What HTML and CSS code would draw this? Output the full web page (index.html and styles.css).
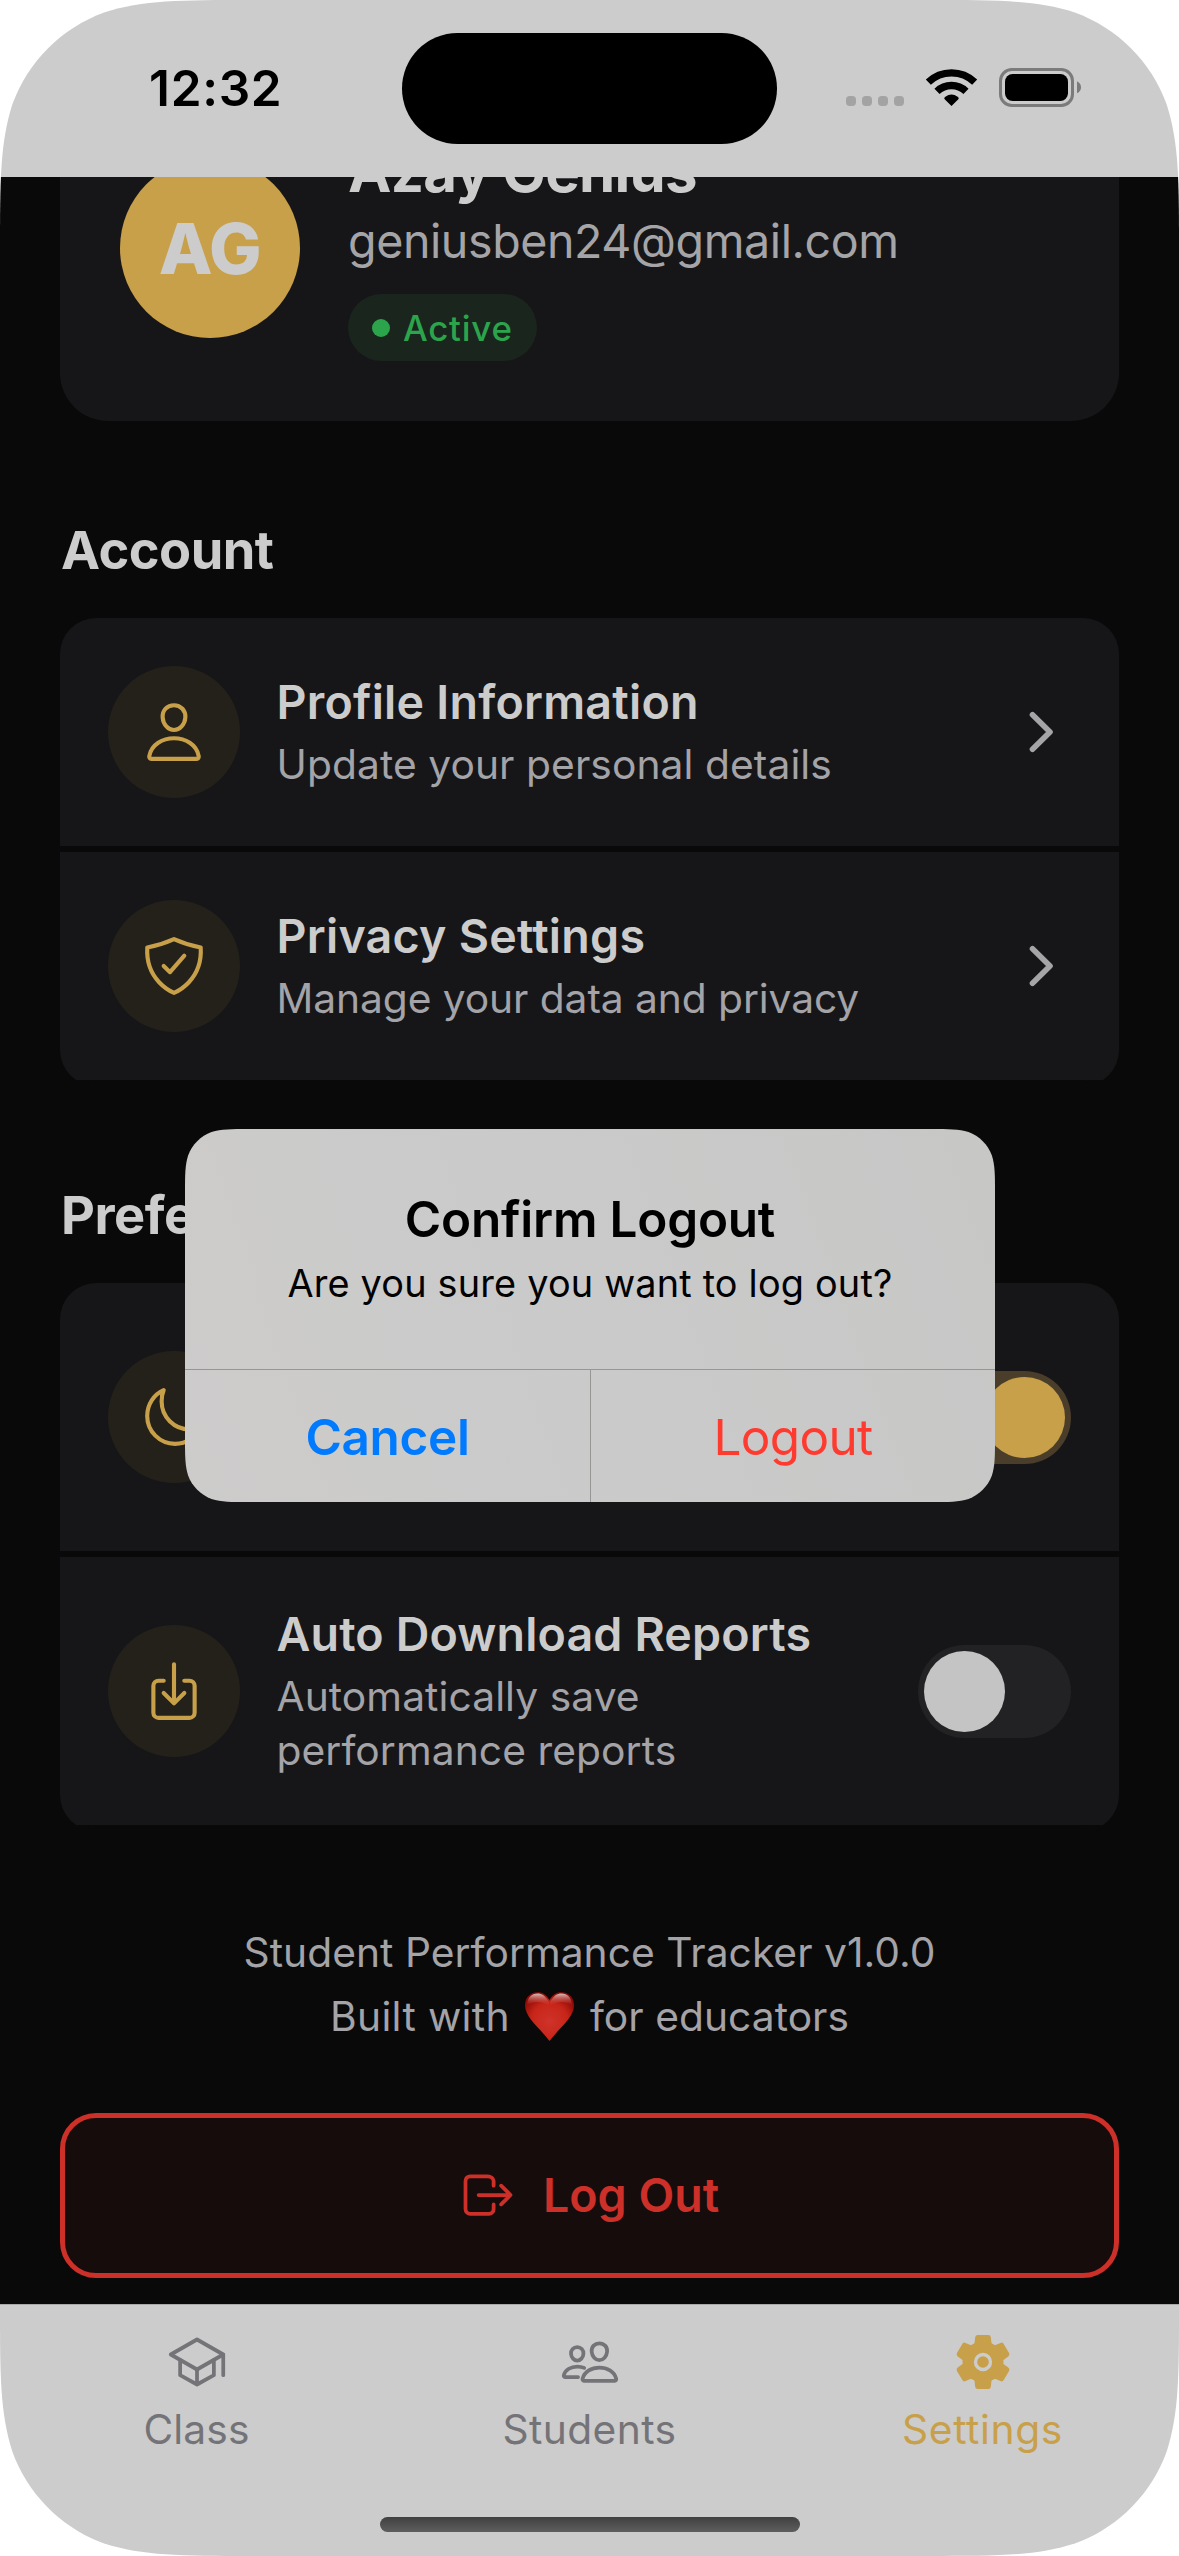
FILE: index.html
```html
<!DOCTYPE html>
<html lang="en">
<head>
<meta charset="utf-8">
<title>Settings</title>
<link rel="stylesheet" href="styles.css">
</head>
<body>
<div class="phone">
  <header class="status-bar">
    <div class="time">12:32</div>
    <div class="island"></div>
    <svg class="status-icons" viewBox="0 0 900 300" aria-hidden="true">
      <g fill="#a3a3a3">
        <rect x="138" y="168" width="30" height="30" rx="11"/>
        <rect x="186" y="168" width="30" height="30" rx="11"/>
        <rect x="234" y="168" width="30" height="30" rx="11"/>
        <rect x="282" y="168" width="30" height="30" rx="11"/>
      </g>
      <g fill="none" stroke="#000">
        <path stroke-width="22" d="M385 126.500A100.500 100.500 0 0 1 524 126.500"/>
        <path stroke-width="22" d="M411 154A62.500 62.500 0 0 1 498 154"/>
      </g>
      <path d="M454.500 198L434 178Q430 173 436 170Q454.500 157 473 170Q479 173 475 178Z"/>
      <rect x="601.500" y="88.500" width="216" height="108" rx="34" fill="none" stroke="#7b7b7b" stroke-width="9"/>
      <rect x="615" y="102" width="189" height="81" rx="23"/>
      <path fill="#7b7b7b" d="M831 124Q843 130 843 142T831 160Z"/>
    </svg>
  </header>

  <main class="content">
    <section class="profile">
      <div class="avatar">AG</div>
      <div class="profile-text">
        <div class="name">Azay Genius</div>
        <div class="email">geniusben24@gmail.com</div>
        <div class="badge"><span class="dot"></span><span>Active</span></div>
      </div>
    </section>

    <h2 class="heading">Account</h2>
    <section class="group">
      <div class="row">
        <div class="icon-circle">
          <svg class="icon" viewBox="0 0 512 512"><path d="M344 144c-3.920 52.870-44 96-88 96s-84.150-43.120-88-96c-4-55 35-96 88-96s92 42 88 96z"/><path d="M256 304c-87 0-175.300 48-191.640 138.600C62.390 453.520 68.570 464 80 464h352c11.440 0 17.620-10.480 15.640-21.400C431.300 352 343 304 256 304z"/></svg>
        </div>
        <div class="row-text">
          <div class="title">Profile Information</div>
          <div class="sub">Update your personal details</div>
        </div>
        <svg class="chevron" viewBox="0 0 60 60"><path d="M21.500 12.700L39 30L21.500 47.300"/></svg>
      </div>
      <div class="row">
        <div class="icon-circle">
          <svg class="icon" viewBox="0 0 512 512"><path d="M336 176L225.200 304 176 255.800"/><path d="M463.100 112.370C373.680 96.330 336.710 84.450 256 48c-80.710 36.450-117.680 48.330-207.100 64.370C32.700 369.130 240.580 457.790 256 464c15.420-6.210 223.300-94.870 207.100-351.630z"/></svg>
        </div>
        <div class="row-text">
          <div class="title">Privacy Settings</div>
          <div class="sub manage">Manage your data and privacy</div>
        </div>
        <svg class="chevron" viewBox="0 0 60 60"><path d="M21.500 12.700L39 30L21.500 47.300"/></svg>
      </div>
    </section>

    <h2 class="heading">Preferences</h2>
    <section class="group">
      <div class="row tall">
        <div class="icon-circle">
          <svg class="icon" viewBox="0 0 512 512"><path d="M160 136c0-30.620 4.510-61.610 16-88C99.570 81.270 48 159.320 48 248c0 119.290 96.710 216 216 216 88.680 0 166.730-51.570 200-128-26.390 11.490-57.380 16-88 16-119.290 0-216-96.710-216-216z"/></svg>
        </div>
        <div class="row-text"></div>
        <div class="toggle on"><span class="knob"></span></div>
      </div>
      <div class="row tall">
        <div class="icon-circle">
          <svg class="icon" viewBox="0 0 512 512"><path d="M336 176h40a40 40 0 0 1 40 40v208a40 40 0 0 1-40 40H136a40 40 0 0 1-40-40V216a40 40 0 0 1 40-40h40"/><path d="M176 272l80 80 80-80M256 48v288"/></svg>
        </div>
        <div class="row-text">
          <div class="title auto">Auto Download Reports</div>
          <div class="sub">Automatically save<br>performance reports</div>
        </div>
        <div class="toggle"><span class="knob"></span></div>
      </div>
    </section>

    <footer class="about">
      <div class="about-line">Student Performance Tracker v1.0.0</div>
      <div class="about-line built">
        <span class="built-with">Built with</span>
        <svg class="heart" viewBox="0 0 49 49" aria-label="love">
          <defs>
            <radialGradient id="heartFill" cx=".5" cy=".6" r=".62">
              <stop offset="0" stop-color="#cf3329"/>
              <stop offset=".6" stop-color="#c82519"/>
              <stop offset="1" stop-color="#8c0904"/>
            </radialGradient>
            <linearGradient id="heartShine" x1="0" y1="0" x2="0" y2="1">
              <stop offset="0" stop-color="#dcc8c5" stop-opacity=".95"/>
              <stop offset="1" stop-color="#cf3329" stop-opacity="0"/>
            </linearGradient>
          </defs>
          <path fill="url(#heartFill)" d="M24.500 8C21 2 17 .3 12.500 .3C5 .3 0 6 0 13C0 26 15 36 24.500 49C34 36 49 26 49 13C49 6 44 .3 36.500 .3C32 .3 28 2 24.500 8Z"/>
          <path fill="url(#heartShine)" d="M24 10C20 3.500 17 1.500 12.500 1.500C6.500 1.500 2.500 5.500 2 13C8 9 18 9 24 14Z"/>
          <path fill="url(#heartShine)" d="M25 10C29 3.500 32 1.500 36.500 1.500C42.500 1.500 46.500 5.500 47 13C41 9 31 9 25 14Z"/>
        </svg>
        <span>for educators</span>
      </div>
    </footer>

    <div class="logout">
      <svg class="logout-icon" viewBox="0 0 512 512"><path d="M304 336v40a40 40 0 0 1-40 40H104a40 40 0 0 1-40-40V136a40 40 0 0 1 40-40h152c22.090 0 48 17.910 48 40v40M368 336l80-80-80-80M176 256h256"/></svg>
      <span>Log Out</span>
    </div>
  </main>

  <nav class="tabs">
    <div class="tab">
      <svg class="tab-icon" viewBox="0 0 512 512"><path d="M32 192L256 64l224 128-224 128L32 192z"/><path d="M112 240v128l144 80 144-80V240M480 368V192M256 320v128"/></svg>
      <span class="label-class">Class</span>
    </div>
    <div class="tab">
      <svg class="tab-icon" viewBox="0 0 512 512"><path d="M402 168c-2.930 40.670-33.100 72-66 72s-63.120-31.320-66-72c-3-42.310 26.370-72 66-72s69 30.460 66 72z"/><path d="M336 304c-65.170 0-127.840 32.370-143.540 95.410-2.080 8.340 3.150 16.590 11.720 16.590h263.650c8.570 0 13.770-8.250 11.720-16.590C463.850 335.360 401.180 304 336 304z"/><path d="M200 185.940c-2.340 32.480-26.720 58.060-53 58.060s-50.700-25.570-53-58.060C91.610 152.150 115.340 128 147 128s55.390 24.770 53 57.940z"/><path d="M206 306c-18.050-8.270-37.930-11.450-59-11.450-52 0-102.100 25.850-114.650 76.200-1.650 6.660 2.530 13.250 9.370 13.250H154"/></svg>
      <span class="label-students">Students</span>
    </div>
    <div class="tab active">
      <svg class="gear" viewBox="-90 -90 180 180">
        <defs><path id="tooth" d="M-33-52C-28-53-25.500-55-25-60L-23.500-74Q-22.500-81-16-81H16Q22.500-81 23.500-74L25-60C25.500-55 28-53 33-52L0 0Z"/></defs>
        <use href="#tooth"/>
        <use href="#tooth" transform="rotate(60)"/>
        <use href="#tooth" transform="rotate(120)"/>
        <use href="#tooth" transform="rotate(180)"/>
        <use href="#tooth" transform="rotate(240)"/>
        <use href="#tooth" transform="rotate(300)"/>
        <circle class="gear-ring" r="22.500"/>
      </svg>
      <span class="label-settings">Settings</span>
    </div>
  </nav>

  <div class="home-indicator"></div>

  <div class="alert" role="alertdialog">
    <div class="alert-body">
      <div class="alert-title">Confirm Logout</div>
      <div class="alert-message">Are you sure you want to log out?</div>
    </div>
    <div class="alert-actions">
      <div class="alert-button cancel">Cancel</div>
      <div class="alert-button destructive">Logout</div>
    </div>
  </div>
</div>
</body>
</html>
```
FILE: styles.css
```css
* { box-sizing: border-box; }

body {
  margin: 0;
  background: #fff;
  font-family: Inter, "Liberation Sans", sans-serif;
  color: #ccc;
}

.phone {
  position: relative;
  display: flex;
  flex-direction: column;
  width: 1179px;
  height: 2556px;
  overflow: hidden;
  clip-path: path("M0 252.200C0 179.600 0 143.300 12.400 104.200C27.900 61.500 61.500 27.900 104.200 12.400C143.300 0 179.600 0 252.200 0H926.800C999.400 0 1035.700 0 1074.800 12.400C1117.500 27.900 1151.100 61.500 1166.600 104.200C1179 143.300 1179 179.600 1179 252.200V2303.800C1179 2376.400 1179 2412.700 1166.600 2451.800C1151.100 2494.500 1117.500 2528.100 1074.800 2543.600C1035.700 2556 999.400 2556 926.800 2556H252.200C179.600 2556 143.300 2556 104.200 2543.600C61.500 2528.100 27.900 2494.500 12.400 2451.800C0 2412.700 0 2376.400 0 2303.800Z");
}

/* Status bar */
.status-bar {
  display: grid;
  grid-template-columns: 402px 375px 1fr;
  align-items: start;
  flex: none;
  height: 177px;
  background: #ccc;
}
.time {
  margin-top: 58px;
  padding-left: 149px;
  font-size: 49.5px;
  font-weight: 600;
  line-height: 60px;
  letter-spacing: .7px;
  color: #000;
}
.island {
  height: 111px;
  margin-top: 33px;
  border-radius: 56px;
  background: #000;
}
.status-icons {
  width: 300px;
  height: 100px;
  margin: 40px 0 0 23px;
}

/* Scrolled page content */
.content {
  flex: none;
  height: 2127px;
  padding: 0 60px;
  overflow: hidden;
  background: #090909;
}
.profile {
  display: flex;
  align-items: center;
  gap: 48px;
  height: 346px;
  margin-top: -102px;
  padding: 60px;
  border-radius: 48px;
  background: #161618;
}
.avatar {
  flex: none;
  width: 180px;
  height: 180px;
  border-radius: 50%;
  background: #c8a04a;
  font-size: 70px;
  font-weight: 800;
  line-height: 181px;
  letter-spacing: -.5px;
  text-align: center;
}
.name {
  font-size: 58.2px;
  font-weight: 700;
  line-height: 72px;
  letter-spacing: -.8px;
}
.email {
  margin-top: 5px;
  font-size: 46.560px;
  line-height: 58px;
  letter-spacing: -.4px;
  color: #a5a5a8;
}
.badge {
  display: inline-flex;
  align-items: center;
  gap: 13px;
  height: 67px;
  margin-top: 24px;
  padding: 1px 24px 0;
  border-radius: 34px;
  background: #1a251e;
  font-size: 34.920px;
  font-weight: 500;
  line-height: 43px;
  letter-spacing: .75px;
  color: #2ba44c;
  vertical-align: top;
}
.dot {
  width: 18px;
  height: 18px;
  border-radius: 50%;
  background: #2ba44c;
}

.heading {
  margin: 96px 0 35px;
  padding-left: 1px;
  font-size: 52.380px;
  font-weight: 700;
  line-height: 66px;
  letter-spacing: -.5px;
}

.group {
  overflow: hidden;
  border-radius: 36px;
}
.row {
  display: flex;
  align-items: center;
  gap: 36px;
  height: 234px;
  padding: 0 48px;
  border-bottom: 6px solid #090909;
  background: #161618;
}
.row.tall { height: 274px; }
.icon-circle {
  display: flex;
  align-items: center;
  justify-content: center;
  flex: none;
  width: 132px;
  height: 132px;
  border-radius: 50%;
  background: #24211b;
}
.icon, .logout-icon, .tab-icon {
  fill: none;
  stroke: currentColor;
  stroke-width: 32;
  stroke-linecap: round;
  stroke-linejoin: round;
}
.icon {
  width: 66px;
  height: 66px;
  color: #c8a04a;
}
.row-text {
  flex: 1;
  padding-left: .5px;
}
.title {
  font-size: 46.560px;
  font-weight: 600;
  line-height: 58px;
  letter-spacing: .25px;
}
.title.auto { letter-spacing: .16px; }
.sub {
  padding-top: 7px;
  margin-bottom: -1px;
  font-size: 40.740px;
  line-height: 54px;
  letter-spacing: .08px;
  color: #a3a3a8;
}
.sub.manage { letter-spacing: -.08px; }
.chevron {
  width: 60px;
  height: 60px;
  fill: none;
  stroke: #a5a5a8;
  stroke-width: 5.600;
  stroke-linecap: round;
  stroke-linejoin: round;
}

.toggle {
  display: flex;
  flex: none;
  width: 153px;
  height: 93px;
  padding: 6px;
  border-radius: 47px;
  background: #222224;
}
.knob {
  width: 81px;
  height: 81px;
  border-radius: 50%;
  background: #c4c4c4;
}
.toggle.on {
  justify-content: flex-end;
  background: #4a3e2a;
}
.toggle.on .knob { background: #c8a04a; }

.about {
  margin-top: 90px;
  font-size: 40.740px;
  line-height: 64px;
  letter-spacing: .04px;
  text-align: center;
  color: #a3a3a8;
}
.built {
  display: flex;
  align-items: center;
  justify-content: center;
  gap: 15.500px;
}
.built-with { letter-spacing: .35px; }
.heart {
  width: 49px;
  height: 49px;
  margin-top: -2px;
}

.logout {
  display: flex;
  align-items: center;
  justify-content: center;
  gap: 25px;
  height: 165px;
  margin-top: 64px;
  padding: 0 2px 2px 0;
  border: 5px solid #cc3028;
  border-radius: 36px;
  background: #170c0c;
  font-size: 46.560px;
  font-weight: 600;
  color: #cc3028;
}
.logout-icon {
  width: 60px;
  height: 60px;
}

/* Tab bar */
.tabs {
  display: grid;
  grid-template-columns: repeat(3, 1fr);
  flex: none;
  height: 252px;
  padding-top: 27px;
  border-top: 1px solid #a9a9aa;
  background: #ccc;
}
.tab {
  display: flex;
  flex-direction: column;
  align-items: center;
  gap: 11px;
  font-size: 40.740px;
  line-height: 54px;
  color: #747478;
}
.tab-icon, .gear {
  width: 60px;
  height: 60px;
}
.tab.active { color: #c8a04a; }
.gear { fill: currentColor; }
.gear-ring {
  stroke: #ccc;
  stroke-width: 10;
}
.label-class { letter-spacing: .13px; }
.label-students { letter-spacing: .4px; }
.label-settings { letter-spacing: .6px; }

.home-indicator {
  position: absolute;
  left: 380px;
  top: 2517px;
  width: 420px;
  height: 15px;
  border-radius: 8px;
  background: linear-gradient(#404040, #5e5e5e);
}

/* Logout confirmation, over the page */
.alert {
  position: absolute;
  left: 185px;
  top: 1129px;
  width: 810px;
  height: 373px;
  background: linear-gradient(70deg, #cdcccb, #cacaca 50%, #c7c7c6);
  clip-path: path("M0 64.200C0 45.700 0 36.500 3.100 26.500C7.100 15.700 15.700 7.100 26.500 3.100C36.500 0 45.700 0 64.200 0H745.800C764.300 0 773.500 0 783.500 3.100C794.300 7.100 802.900 15.700 806.900 26.500C810 36.500 810 45.700 810 64.200V308.800C810 327.300 810 336.500 806.900 346.500C802.900 357.300 794.300 365.900 783.500 369.900C773.500 373 764.300 373 745.800 373H64.200C45.700 373 36.500 373 26.500 369.900C15.700 365.900 7.100 357.300 3.100 346.500C0 336.500 0 327.300 0 308.800Z");
  text-align: center;
  color: #000;
}
.alert-body {
  height: 240px;
  padding-top: 60px;
}
.alert-title {
  font-size: 49.470px;
  font-weight: 600;
  line-height: 60px;
  letter-spacing: -.22px;
}
.alert-message {
  margin-top: 10px;
  font-size: 37.830px;
  line-height: 48px;
  letter-spacing: .19px;
}
.alert-actions {
  display: grid;
  grid-template-columns: 406px 1fr;
  height: 133px;
  border-top: 1px solid #969695;
}
.alert-button {
  padding-top: 1px;
  font-size: 49.470px;
  line-height: 132px;
}
.cancel {
  border-right: 1px solid #969695;
  font-weight: 600;
  letter-spacing: -.34px;
  color: #007aff;
}
.destructive {
  letter-spacing: -.68px;
  color: #ff3b30;
}
```
